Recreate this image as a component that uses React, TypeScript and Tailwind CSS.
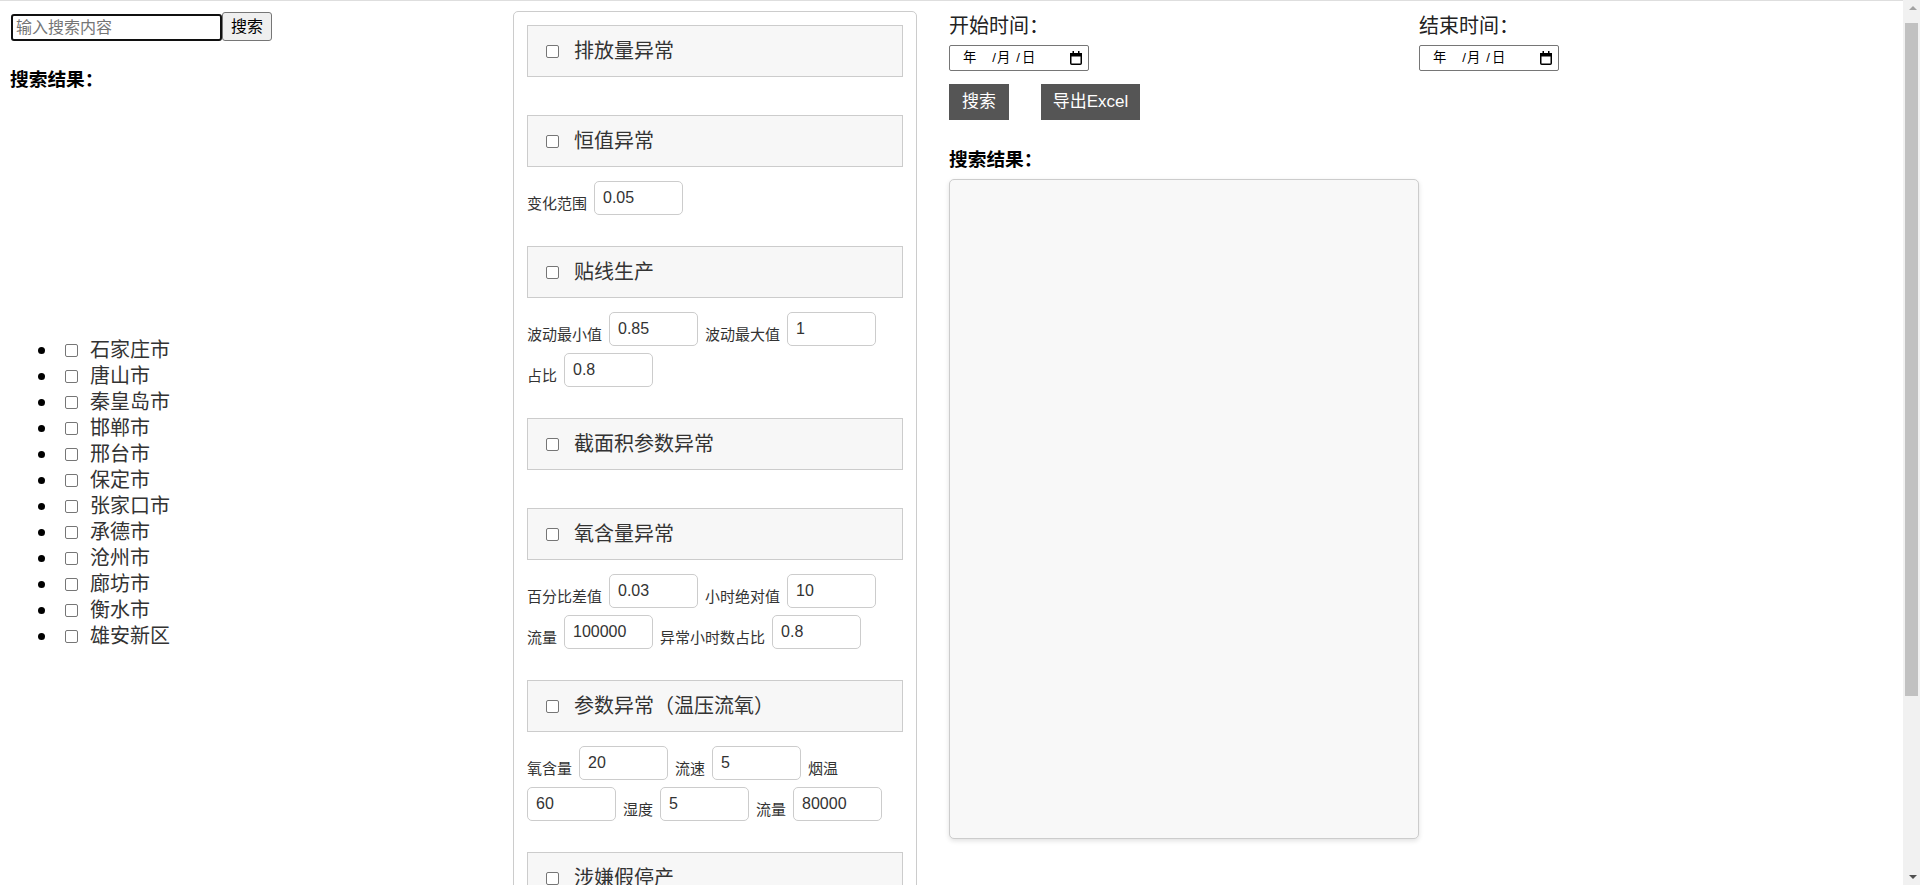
import React from "react";

type Param = [string, string];
type Section = { title: string; params: Param[] };

const sections: Section[] = [
  { title: "排放量异常", params: [] },
  { title: "恒值异常", params: [["变化范围", "0.05"]] },
  {
    title: "贴线生产",
    params: [
      ["波动最小值", "0.85"],
      ["波动最大值", "1"],
      ["占比", "0.8"],
    ],
  },
  { title: "截面积参数异常", params: [] },
  {
    title: "氧含量异常",
    params: [
      ["百分比差值", "0.03"],
      ["小时绝对值", "10"],
      ["流量", "100000"],
      ["异常小时数占比", "0.8"],
    ],
  },
  {
    title: "参数异常（温压流氧）",
    params: [
      ["氧含量", "20"],
      ["流速", "5"],
      ["烟温", "60"],
      ["湿度", "5"],
      ["流量", "80000"],
    ],
  },
  { title: "涉嫌假停产", params: [] },
];

const cities = [
  "石家庄市",
  "唐山市",
  "秦皇岛市",
  "邯郸市",
  "邢台市",
  "保定市",
  "张家口市",
  "承德市",
  "沧州市",
  "廊坊市",
  "衡水市",
  "雄安新区",
];

function CalendarIcon() {
  return (
    <svg width="12" height="14" viewBox="0 0 12 14" className="block">
      <rect x="0.75" y="2.75" width="10.5" height="10.5" rx="1" fill="none" stroke="#000" strokeWidth="1.5" />
      <rect x="0" y="2" width="12" height="3.5" fill="#000" />
      <rect x="2.5" y="0" width="1.5" height="3" fill="#000" />
      <rect x="8" y="0" width="1.5" height="3" fill="#000" />
    </svg>
  );
}

function Check({ className = "" }: { className?: string }) {
  return (
    <input
      type="checkbox"
      className={
        "h-[13px] w-[13px] flex-none appearance-none rounded-[2px] border border-[#767676] bg-white " + className
      }
    />
  );
}

function DateBox() {
  return (
    <div className="mt-[6px] flex h-[26px] w-[140px] items-center rounded-[2px] border border-[#767676] bg-white text-[13.33px] leading-none text-black">
      <span className="ml-[13px]">年</span>
      <span className="ml-[16px]">/</span>
      <span className="ml-[1px]">月</span>
      <span className="ml-[6px]">/</span>
      <span className="ml-[2px]">日</span>
      <span className="ml-auto mr-[6px]">
        <CalendarIcon />
      </span>
    </div>
  );
}

function FakeScrollbar() {
  return (
    <div className="fixed right-0 top-0 h-screen w-[17px] bg-[#f1f1f1]">
      <div className="absolute left-[6px] top-[6px] h-0 w-0 border-x-[4px] border-b-[4px] border-x-transparent border-b-[#a3a3a3]" />
      <div className="absolute left-[2px] top-[23px] h-[673px] w-[13px] bg-[#c1c1c1]" />
      <div className="absolute bottom-[6px] left-[6px] h-0 w-0 border-x-[4px] border-t-[4px] border-x-transparent border-t-[#505050]" />
    </div>
  );
}

export default function App() {
  return (
    <div className="min-h-screen border-t border-[#dedede] bg-white font-['Liberation_Sans','Noto_Sans_CJK_SC',sans-serif] text-[#333]">
      <div className="flex items-start">
        {/* Left column */}
        <div className="w-[513px] flex-none">
          <div className="ml-[11px] mt-[11px] flex items-end">
            <input
              placeholder="输入搜索内容"
              className="h-[27px] w-[211px] rounded-[3px] border-2 border-[#101010] px-[3px] text-[16px] text-black outline-none placeholder:text-[#757575]"
            />
            <button className="h-[29px] rounded-[3px] border border-[#767676] bg-[#efefef] px-[8px] text-[16px] leading-none text-black">
              搜索
            </button>
          </div>
          <h3 className="ml-[10px] mt-[27px] text-[18.72px] font-bold leading-[24px] text-black">搜索结果：</h3>
          <ul className="mt-[245px]">
            {cities.map((c) => (
              <li key={c} className="flex h-[26px] items-center">
                <span className="ml-[38px] h-[7px] w-[7px] rounded-full bg-black" />
                <Check className="ml-[20px]" />
                <span className="ml-[12px] text-[20px] leading-[26px] text-[#333]">{c}</span>
              </li>
            ))}
          </ul>
        </div>

        {/* Middle panel */}
        <div className="mb-[10px] mt-[10px] min-h-[1100px] w-[404px] flex-none rounded-[5px] border border-[#ccc] px-[13px] pt-[13px]">
          {sections.map((s) => (
            <div key={s.title}>
              <div className="flex h-[52px] items-center border border-[#ccc] bg-[#f7f7f7] pl-[18px]">
                <Check />
                <span className="ml-[15px] text-[20px] leading-[26px] text-[#333]">{s.title}</span>
              </div>
              {s.params.length === 0 ? (
                <div className="h-[38px]" />
              ) : (
                <div className="flex flex-wrap items-end gap-[7px] pb-[31px] pt-[14px]">
                  {s.params.map(([label, value], i) => (
                    <React.Fragment key={label + i}>
                      <span className="text-[15px] leading-[22px] text-[#333]">{label}</span>
                      <input
                        defaultValue={value}
                        className="h-[34px] w-[89px] rounded-[5px] border border-[#ccc] bg-white pl-[8px] text-[16px] text-[#333] outline-none"
                      />
                    </React.Fragment>
                  ))}
                </div>
              )}
            </div>
          ))}
        </div>

        {/* Right column */}
        <div className="ml-[32px] flex-1">
          <div className="mt-[12px] grid grid-cols-[470px_470px]">
            <div>
              <div className="text-[20px] leading-[26px] text-[#222]">开始时间：</div>
              <DateBox />
            </div>
            <div>
              <div className="text-[20px] leading-[26px] text-[#222]">结束时间：</div>
              <DateBox />
            </div>
          </div>
          <div className="mt-[13px] flex gap-[32px]">
            <button className="h-[36px] w-[60px] bg-[#555] text-center text-[17px] leading-[36px] text-white">搜索</button>
            <button className="h-[36px] w-[99px] bg-[#555] text-center text-[17px] leading-[36px] text-white">导出Excel</button>
          </div>
          <h3 className="mt-[28px] text-[18.72px] font-bold leading-[24px] text-black">搜索结果：</h3>
          <div className="mt-[7px] h-[660px] w-[470px] rounded-[5px] border border-[#ccc] bg-[#f8f8f8] shadow-[0_2px_5px_rgba(0,0,0,0.12)]" />
        </div>
      </div>
      <FakeScrollbar />
    </div>
  );
}
